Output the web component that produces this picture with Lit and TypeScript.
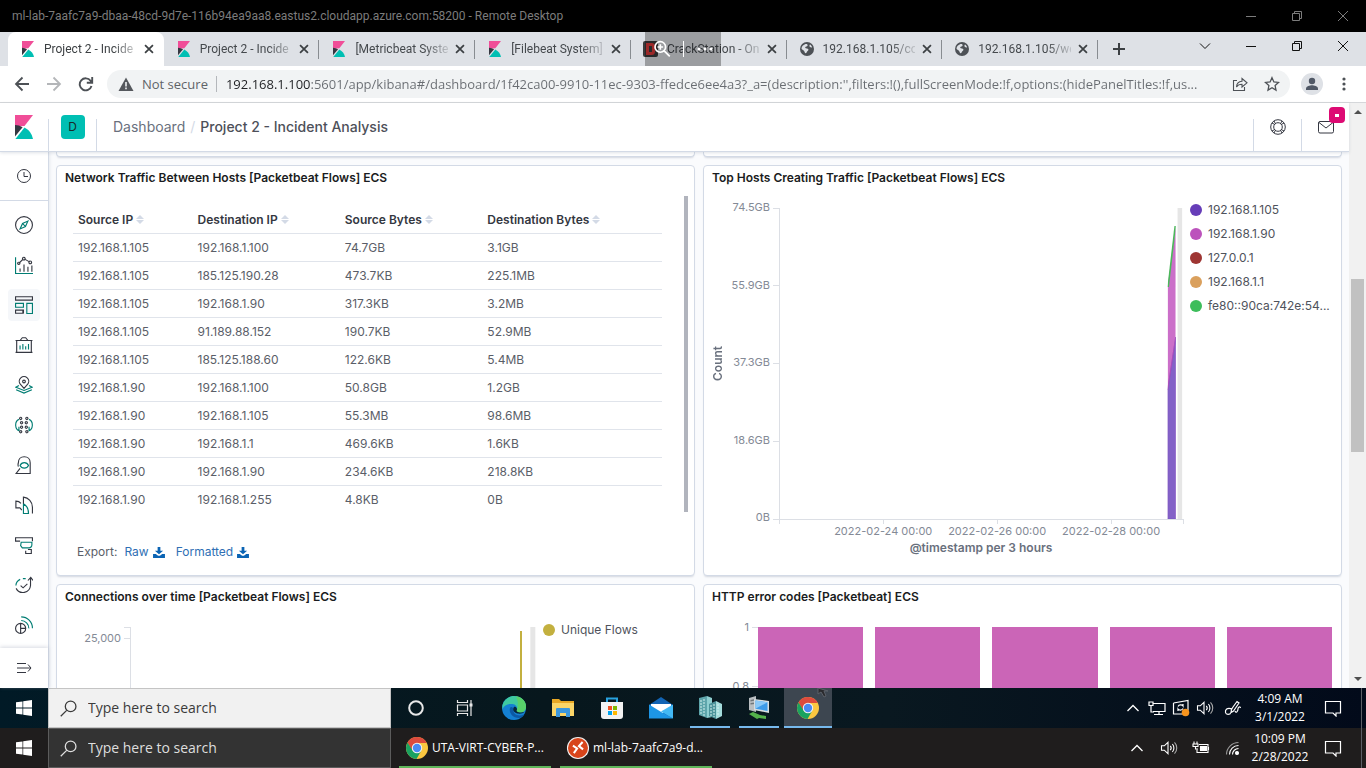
import { LitElement, html, svg, css, nothing } from "lit";
import { customElement, property } from "lit/decorators.js";
import { classMap } from "lit/directives/class-map.js";
import { styleMap } from "lit/directives/style-map.js";

const kibanaMark = (size: number) => html`<svg width=${size} height=${size} viewBox="0 0 24 24" aria-hidden="true">
  <path fill="#f04e98" d="M3 0v11.5L12.5 11 21 0z" />
  <path fill="#343741" d="M3 10v11.5l7.6-9.3A16 16 0 0 0 3 10z" />
  <path fill="#00bfb3" d="M12.5 12.6 3.4 24H21a16.5 16.5 0 0 0-8.5-11.4z" />
</svg>`;

const globe = html`<svg width="16" height="16" viewBox="0 0 16 16" aria-hidden="true">
  <circle cx="8" cy="8" r="7" fill="#4d5156" />
  <path fill="#dee1e6" d="M6 3.2c1.6-.6 3 .2 2.6 1.4-.5 1.2-2 .8-2.4 2-.3 1 1.5.8 2.6 1.1 1 .4.7 1.8-.2 2.4-.9.7-.7 1.9-1.8 2.2-1 .2-1-1.4-1.7-2.3C4.300 9 2.700 8.600 2.500 7.500 2.700 5.500 4.300 3.800 6 3.200zM11 3.600c1 .6 1.700 1.600 2 2.600-.9.500-2.200.1-2.500-.9-.2-.7 0-1.300.5-1.700z" />
</svg>`;

const crack = html`<svg width="16" height="16" viewBox="0 0 16 16" aria-hidden="true">
  <rect x="0" y="0" width="15" height="16" rx="2" fill="#3b3b3d" />
  <path fill="none" stroke="#e03c3c" stroke-width="3" d="M4.500 3.500h4a2 2 0 0 1 2 2v5a2 2 0 0 1-2 2h-4z" />
</svg>`;

const chromeLogo = html`<svg width="24" height="24" viewBox="0 0 24 24" aria-hidden="true">
  <circle cx="12" cy="12" r="11" fill="#fbc740" />
  <path fill="#dd4b3e" d="M2.500 6.500A11 11 0 0 1 21.700 6.900H12L7 14.500z" />
  <path fill="#1aa260" d="M2.500 6.500 7.600 14.500 12 17l4.400-2.500L11.500 23A11 11 0 0 1 2.500 6.500z" />
  <circle cx="12" cy="12" r="5.200" fill="#f4f4f4" />
  <circle cx="12" cy="12" r="4.200" fill="#4a8af4" />
</svg>`;

const winLogo = html`<svg width="16" height="16" viewBox="0 0 16 16" aria-hidden="true" fill="#fff">
  <path d="M0 2.300 6.500 1.400v6.200H0zM7.200 1.300 16 0v7.600H7.200zM0 8.400h6.500v6.200L0 13.700zM7.200 8.400H16V16l-8.800-1.300z" />
</svg>`;

const line = (d: string, size = 16, width = 1, color = "currentColor") => html`<svg
  width=${size} height=${size} viewBox="0 0 16 16" fill="none" stroke=${color} stroke-width=${width} aria-hidden="true"><path d=${d} /></svg>`;

const duo = (dark: string, teal: string) => html`<svg width="18" height="18" viewBox="0 0 16 16" fill="none" aria-hidden="true">
  <path stroke="#343741" d=${dark} /><path stroke="#017d73" d=${teal} /></svg>`;

const chevronUp = line("M2.500 11 8 5.500l5.500 5.500", 16, 1.3);
const notification = html`<svg width="18" height="18" viewBox="0 0 18 18" fill="none" stroke="#fff" stroke-width="1.200" aria-hidden="true">
  <path d="M1.500 2.500h15v11.500h-4.500v3l-3-3h-7.500z" /></svg>`;
const speaker = html`<svg width="18" height="18" viewBox="0 0 18 18" fill="none" stroke="#fff" stroke-width="1.100" aria-hidden="true">
  <path d="M1.500 6.800h2.800L8 3.300v11.400l-3.700-3.500H1.500z" /><path d="M10.300 6.800c1 1.200 1 3.200 0 4.400M12.400 5c2 2.200 2 5.800 0 8" /><path d="M14.500 3.300c3 3 3 8.400 0 11.400" stroke="#aaa" /></svg>`;

@customElement("remote-titlebar")
class RemoteTitlebar extends LitElement {
  static styles = css`
    :host { display: flex; align-items: center; height: 32px; padding-left: 12px; background: #000; color: #7c7c7c;
      font: 12px/16px Roboto, "Noto Sans", sans-serif; }
    .name { flex: 1; white-space: nowrap; overflow: hidden; }
    .win { width: 46px; height: 32px; padding: 0; border: 0; background: none; color: inherit; display: grid; place-items: center; }
  `;
  render() {
    return html`<span class="name">ml-lab-7aafc7a9-dbaa-48cd-9d7e-116b94ea9aa8.eastus2.cloudapp.azure.com:58200 - Remote Desktop</span>
      <button class="win" aria-label="Minimize">${line("M3 8.500h10")}</button>
      <button class="win" aria-label="Restore">${line("M3.500 5.500h7v7h-7zM5.500 5.500v-2h7v7h-2")}</button>
      <button class="win" aria-label="Close">${line("M3 3l10 10M13 3 3 13")}</button>`;
  }
}

@customElement("browser-tabs")
class BrowserTabs extends LitElement {
  static styles = css`
    :host { display: flex; position: relative; height: 34px; background: #dee1e6; color: #45494d;
      font: 12px/16px Roboto, "Noto Sans", sans-serif; }
    .tabs { display: flex; flex: 0 1 1098px; min-width: 0; padding-left: 8px; box-sizing: border-box; }
    .tab { flex: 1 1 0; min-width: 0; display: flex; align-items: center; gap: 8px; padding: 0 7px 0 12px; position: relative; }
    .tab.active { background: #fff; border-radius: 8px 8px 0 0; color: #3c4043; }
    .tab.split::after { content: ""; position: absolute; right: 0; top: 8px; width: 1px; height: 19px; background: #888c91; }
    .icon { display: flex; }
    .label { flex: 1; min-width: 0; white-space: nowrap; margin-right: -4px;
      -webkit-mask-image: linear-gradient(90deg, #000 74%, transparent 106%); mask-image: linear-gradient(90deg, #000 74%, transparent 106%); }
    .x, .plus, .win { border: 0; padding: 0; background: none; color: #3c4043; display: grid; place-items: center; }
    .x { width: 16px; height: 18px; flex: none; }
    .plus { width: 42px; }
    .controls { margin-left: auto; display: flex; color: #111; }
    .win { width: 46px; height: 28px; color: #111; }
    .zoom { position: absolute; left: 645px; top: 0; width: 76px; height: 34px; box-sizing: border-box; background: rgba(0, 0, 0, 0.3);
      display: flex; align-items: center; gap: 12px; padding-left: 8px; color: #fff; }
    .bar { width: 1px; height: 16px; background: #fff; }
  `;
  tabs = [
    { icon: kibanaMark(16), text: "Project 2 - Incide" },
    { icon: kibanaMark(16), text: "Project 2 - Incide" },
    { icon: kibanaMark(16), text: "[Metricbeat Syste" },
    { icon: kibanaMark(16), text: "[Filebeat System]" },
    { icon: crack, text: "CrackStation - On" },
    { icon: globe, text: "192.168.1.105/co" },
    { icon: globe, text: "192.168.1.105/we" },
  ];
  render() {
    return html`<div class="tabs">
        ${this.tabs.map((t, i) => html`<div class=${classMap({ tab: true, active: i === 0, split: i > 0 })}>
          <span class="icon">${t.icon}</span><span class="label">${t.text}</span>
          <button class="x" aria-label="Close tab">${line("M3.500 3.500l9 9M12.500 3.500l-9 9", 14, 2)}</button>
        </div>`)}
      </div>
      <button class="plus" aria-label="New tab">${line("M8 2v12M2 8h12", 16, 2)}</button>
      <div class="controls">
        <button class="win" aria-label="Search tabs">${line("M3 5.500l5 5 5-5")}</button>
        <button class="win" aria-label="Minimize">${line("M3 8.500h10")}</button>
        <button class="win" aria-label="Restore">${line("M3.500 5.500h7v7h-7zM5.500 5.500v-2h7v7h-2")}</button>
        <button class="win" aria-label="Close">${line("M3 3l10 10M13 3 3 13")}</button>
      </div>
      <div class="zoom">
        ${line("M6.500 1.500a4.700 4.700 0 1 0 0 9.400 4.700 4.700 0 0 0 0-9.400zM9.900 9.600l5 5M4 6.200h5M6.500 3.700v5", 18, 1.5)}
        <span class="bar"></span>
        <svg width="18" height="6" fill="#fff" aria-hidden="true"><circle cx="3" cy="3" r="1.500" /><circle cx="9" cy="3" r="1.500" /><circle cx="15" cy="3" r="1.500" /></svg>
      </div>`;
  }
}

@customElement("browser-toolbar")
class BrowserToolbar extends LitElement {
  static styles = css`
    :host { display: flex; align-items: center; height: 36px; padding: 0 6px; background: #fff; border-bottom: 1px solid #d5d7da; color: #4d5156;
      font: 13px/20px "Open Sans", "Noto Sans", sans-serif; }
    button { width: 32px; height: 28px; padding: 0; border: 0; background: none; color: inherit; display: grid; place-items: center; flex: none; }
    .off { color: #b4b6b9; }
    .omni { flex: 1; min-width: 0; display: flex; align-items: center; height: 28px; margin: 0 6px 0 5px; padding: 0 2px 0 11px;
      border-radius: 14px; background: #f1f3f4; }
    .warn { display: flex; margin-right: 8px; }
    .state { color: #5f6368; white-space: nowrap; padding-right: 8px; margin-right: 9px; border-right: 1px solid #b4b7bb; line-height: 16px; }
    .url { flex: 1; min-width: 0; border: 0; padding: 0; margin: 0; outline: 0; font: inherit; color: transparent; text-overflow: ellipsis;
      background: linear-gradient(90deg, #202124 85px, #696d72 85px); -webkit-background-clip: text; background-clip: text; }
  `;
  render() {
    return html`<button aria-label="Back">${line("M15 8H2M8.500 1.500 2 8l6.500 6.500", 16, 1.8)}</button>
      <button class="off" aria-label="Forward">${line("M1 8h13M7.500 1.500 14 8l-6.500 6.500", 16, 1.8)}</button>
      <button aria-label="Reload">${line("M13.500 10a6 6 0 1 1-.9-5.200L14 6.500M14.200 1v5.700H8.800", 16, 1.9)}</button>
      <div class="omni">
        <span class="warn"><svg width="16" height="16" viewBox="0 0 16 16" aria-hidden="true"><path fill="#55585d" d="M8 1.500 15.500 15H.5z" /><path stroke="#f1f3f4" stroke-width="1.600" d="M8 6v4.500M8 11.600v1.600" /></svg></span>
        <span class="state">Not secure</span>
        <input class="url" aria-label="Address" value="192.168.1.100:5601/app/kibana#/dashboard/1f42ca00-9910-11ec-9303-ffedce6ee4a3?_a=(description:'',filters:!(),fullScreenMode:!f,options:(hidePanelTitles:!f,us..." />
        <button aria-label="Share">${line("M5 4.500H1.500v10h11V11M4.500 11c.2-3.500 2-5.500 5.500-5.700V2.500l5 4.300-5 4.200V8.300C7.500 8.300 5.700 9 4.500 11z", 16, 1.1)}</button>
        <button aria-label="Bookmark">${line("M8 1.700l1.900 4.200 4.600.5-3.400 3.100.9 4.600-4-2.400-4 2.400.9-4.600L1.500 6.400l4.600-.5z", 16, 1.3)}</button>
      </div>
      <button aria-label="Profile"><svg width="22" height="22" viewBox="0 0 22 22" aria-hidden="true"><circle cx="11" cy="11" r="11" fill="#dee1e6" /><circle cx="11" cy="8" r="3.200" fill="#505866" /><path fill="#505866" d="M5 17v-1.500c0-2.200 4-3.200 6-3.200s6 1 6 3.200V17z" /></svg></button>
      <button aria-label="Menu"><svg width="4" height="16" fill="#4d5156" aria-hidden="true"><circle cx="2" cy="3" r="1.600" /><circle cx="2" cy="8" r="1.600" /><circle cx="2" cy="13" r="1.600" /></svg></button>`;
  }
}

@customElement("kibana-header")
class KibanaHeader extends LitElement {
  static styles = css`
    :host { display: flex; height: 48px; background: #fff; border-bottom: 1px solid #d3dae6; box-shadow: 0 1px 3px rgba(152, 162, 179, 0.3);
      font: 14px/20px Inter, sans-serif; color: #343741; z-index: 2; }
    .cell { width: 48px; display: grid; place-items: center; box-sizing: border-box; flex: none; position: relative; border: 0; padding: 0; background: none; color: inherit; }
    .rule { border-left: 1px solid #d3dae6; margin-top: 16px; }
    .space { width: 24px; height: 24px; border-radius: 4px; background: #00bfb3; color: #182b2b; font-size: 12px; line-height: 24px; text-align: center; }
    .lift { margin-top: -16px; display: grid; }
    .crumbs { flex: 1; display: flex; gap: 5px; align-items: center; margin-top: 16px; padding: 0 0 16px 16px; border-left: 1px solid #d3dae6; min-width: 0; white-space: nowrap; }
    a { color: #69707d; text-decoration: none; }
    .sep { color: #d3dae6; }
    .here { font-weight: 500; color: #4d5059; }
    .mark { position: absolute; right: 4px; top: -12px; width: 16px; height: 16px; border-radius: 4px; background: #dd0a73; display: grid; place-items: center; }
    .mark::after { content: ""; width: 4px; height: 3px; background: #fff; }
  `;
  render() {
    return html`<span class="cell">${kibanaMark(24)}</span>
      <span class="cell rule"><span class="lift space">D</span></span>
      <nav class="crumbs"><a href="#">Dashboard</a><span class="sep">/</span><span class="here">Project 2 - Incident Analysis</span></nav>
      <button class="cell rule" aria-label="Help"><span class="lift"><svg width="16" height="16" viewBox="0 0 16 16" fill="none" stroke="#343741" aria-hidden="true"><circle cx="8" cy="8" r="7.300" /><circle cx="8" cy="8" r="4.300" /><path d="M2 4l2.600 1.400M4 2l1.400 2.600M14 4l-2.600 1.400M12 2l-1.400 2.600M2 12l2.600-1.400M4 14l1.400-2.600M14 12l-2.600-1.400M12 14l-1.400-2.600" /></svg></span></button>
      <button class="cell rule" aria-label="News"><span class="lift"><svg width="16" height="16" viewBox="0 0 16 16" fill="none" stroke="#343741" aria-hidden="true"><rect x=".5" y="2.500" width="15" height="11.500" rx="1.500" /><path d="M1 3.500 8 9l7-5.500" /></svg></span><span class="mark"></span></button>`;
  }
}

@customElement("kibana-nav")
class KibanaNav extends LitElement {
  static styles = css`
    :host { display: flex; flex-direction: column; flex: none; width: 48px; background: #fff; border-right: 1px solid #d3dae6; box-shadow: 1px 0 3px rgba(152, 162, 179, 0.2); z-index: 1; }
    .recent { height: 48px; border-bottom: 1px solid #d3dae6; display: grid; place-items: center; flex: none; }
    .apps { flex: 1; min-height: 0; overflow: hidden; padding: 8px; display: flex; flex-direction: column; gap: 8px; }
    .foot { height: 40px; display: grid; place-items: center; flex: none; box-shadow: 0 -1px 4px rgba(152, 162, 179, 0.4); }
    button { width: 32px; height: 32px; flex: none; padding: 0; border: 0; border-radius: 4px; background: none; color: #343741; display: grid; place-items: center; }
    .on { background: #f5f7fa; }
  `;
  items = [
    ["Discover", duo("M8 .5a7.500 7.500 0 1 0 0 15 7.500 7.500 0 0 0 0-15z", "M11.500 4.500 9.300 9.300 4.500 11.500 6.700 6.700zM7 7l2 2")],
    ["Visualize", duo("M4.500 11v3M8 7.500V14M11.500 9.500V14M15 8.500V14M4 6l2.500-2.500M9 3l3.500 2M3.300 5.500a1 1 0 1 0 .1 0M7.800 1.200a1.200 1.200 0 1 0 .1 0M13.500 4.500a1.200 1.200 0 1 0 .1 0", "M.5 1v14.500H16")],
    ["Dashboard", duo("M.5.700h15v3H.5zM.5 12.500h6.500v2.800H.5zM7.500 12v3.500", "M.5 6.500h7v3.500h-7zM10.500 6.500h5v9h-5z")],
    ["Canvas", duo("M.5 4h15M1.500 4v11M14.500 4v11M.5 14.500h15M4.500 4l2-2.500h3l2 2.500", "M4.500 8.500V12M7 7v5M9.500 9v3M12 7v5")],
    ["Maps", duo("M8 11 4.700 7.300a4.200 4.200 0 1 1 6.600 0zM8 3.700a1.200 1.200 0 1 0 0 2.400 1.200 1.200 0 0 0 0-2.400z", "M3.500 8.500.800 10 8 12.800 15.200 10l-2.700-1.500M1 12.300 8 15.200l7-2.900")],
    ["Machine Learning", duo("M5 1.200a1 1 0 1 0 .1 0M10.500 1.200a1 1 0 1 0 .1 0M5.800 5a1 1 0 1 0 .1 0M10 5a1 1 0 1 0 .1 0M5.800 9a1 1 0 1 0 .1 0M10 9a1 1 0 1 0 .1 0M5 13a1 1 0 1 0 .1 0M10.500 13a1 1 0 1 0 .1 0", "M3.500 3C1 4 .5 6 .6 8.500.800 11 1.500 12.500 3.500 13V9.500M12.500 3c2.500 1 3 3 2.900 5.500-.2 2.500-.9 4-2.900 4.500V9.500")],
    ["Metrics", duo("M3 9.500A5.300 5.300 0 0 1 3 6C3 3 5 .7 8.200.7S13.500 3 13.500 6v9.500H1L4.500 11", "M4.500 8.500c1.500-3.500 6-3.500 7.500 0-1.500 3-6 3-7.500 0z")],
    ["Logs", duo("M4.500 10.500H.8V4.500c2 0 3.500.8 4.500 2M4.500 10.500l1.500 2M7.500 7V1c4.500.5 8 4 8 9v5.500", "M7.500 7c3 1.500 4.500 4 4.500 8.500H7.500V7")],
    ["APM", duo("M.5 5V1.500h15v3.200M.5 4.500h4M9.500 13v2.500h5V12h-3", "M5.500 5.500h9.500V8a2.500 2.500 0 0 1-2.500 2.500H6.500L5 8.500z")],
    ["Uptime", duo("M1 11a6.800 6.800 0 0 0 12.800-2.500V2M11.500 4 14 1.200 16 4M5 8.500l2.200 2L11 7", "M.8 8.500c.1-2.700 1.500-4.500 3.800-5.500M7 2.300h2.500")],
    ["Security", duo("M5 6.500a4.500 4.500 0 1 0 4.500 4.500H5zM5 6.500v9M9.500 11A4.500 4.500 0 0 0 5 6.500", "M5.500 4A7 7 0 0 1 12.300 11M5.500.8a10 10 0 0 1 10 10")],
  ] as const;
  render() {
    return html`<div class="recent"><button aria-label="Recently viewed">${line("M8 1.500a6.500 6.500 0 1 0 0 13 6.500 6.500 0 0 0 0-13zM8 4v4.500h4")}</button></div>
      <nav class="apps">${this.items.map(([n, i], k) => html`<button class=${classMap({ on: k === 2 })} aria-label=${n}>${i}</button>`)}</nav>
      <div class="foot"><button aria-label="Expand">${line("M1 3.500h9M1 8h14M1 12.500h9M12 4.500 15 8l-3 3.500")}</button></div>`;
  }
}

@customElement("dash-panel")
class DashPanel extends LitElement {
  @property() heading = "";
  static styles = css`
    :host { display: block; box-sizing: border-box; min-width: 0; background: #fff; border: 1px solid #d3dae6; border-radius: 4px;
      box-shadow: 0 2px 2px -1px rgba(152, 162, 179, 0.4); font-family: Inter, sans-serif; }
    h2 { margin: 0; padding: 0 8px; font-size: 12px; line-height: 24px; font-weight: 600; color: #1a1c21; white-space: nowrap; overflow: hidden; }
  `;
  render() {
    return html`<h2>${this.heading}</h2><slot></slot>`;
  }
}

@customElement("traffic-table")
class TrafficTable extends LitElement {
  static styles = css`
    :host { display: flex; flex-direction: column; height: 385px; padding: 6px 6px 0 16px; box-sizing: border-box; font: 12px/16px Inter, sans-serif; color: #5a5e68; }
    .scroll { display: flex; justify-content: space-between; gap: 22px; height: 316px; }
    table { flex: 1; border-collapse: collapse; table-layout: fixed; margin-top: 10px; align-self: flex-start; }
    th, td { height: 27px; padding: 0 0 0 5px; text-align: left; border-bottom: 1px solid #e0e4eb; white-space: nowrap; }
    th { font-weight: 600; color: #343741; }
    tr:last-child td { border-bottom: 0; }
    .a { width: 20.3%; } .b { width: 25%; } .c { width: 24.2%; }
    .thumb { width: 4px; background: #b1b4bd; }
    .sort { margin-left: 3px; }
    .export { display: flex; align-items: center; padding: 32px 0 0 4px; }
    .export a { display: flex; align-items: center; gap: 4px; margin-left: 7px; margin-right: 4px; color: #2f6fb4; text-decoration: none; }
  `;
  rows = [
    ["192.168.1.105", "192.168.1.100", "74.7GB", "3.1GB"],
    ["192.168.1.105", "185.125.190.28", "473.7KB", "225.1MB"],
    ["192.168.1.105", "192.168.1.90", "317.3KB", "3.2MB"],
    ["192.168.1.105", "91.189.88.152", "190.7KB", "52.9MB"],
    ["192.168.1.105", "185.125.188.60", "122.6KB", "5.4MB"],
    ["192.168.1.90", "192.168.1.100", "50.8GB", "1.2GB"],
    ["192.168.1.90", "192.168.1.105", "55.3MB", "98.6MB"],
    ["192.168.1.90", "192.168.1.1", "469.6KB", "1.6KB"],
    ["192.168.1.90", "192.168.1.90", "234.6KB", "218.8KB"],
    ["192.168.1.90", "192.168.1.255", "4.8KB", "0B"],
  ];
  render() {
    const sort = html`<svg class="sort" width="8" height="9" viewBox="0 0 8 9" fill="#d3dae6" aria-hidden="true"><path d="M4 0l4 4H0zM0 5h8L4 9z" /></svg>`;
    const save = html`<svg width="12" height="11" viewBox="0 0 13 12" fill="#0b64b4" aria-hidden="true"><path d="M5 0h3v4h3L6.500 8 2 4h3zM0 7.500h3l2.500 2h2l2.500-2h3V12H0z" /></svg>`;
    return html`<div class="scroll">
        <table>
          <thead><tr><th class="a">Source IP${sort}</th><th class="b">Destination IP${sort}</th><th class="c">Source Bytes${sort}</th><th>Destination Bytes${sort}</th></tr></thead>
          <tbody>${this.rows.map((r) => html`<tr>${r.map((c) => html`<td>${c}</td>`)}</tr>`)}</tbody>
        </table>
        <div class="thumb"></div>
      </div>
      <div class="export">Export: <a href="#">Raw ${save}</a><a href="#">Formatted ${save}</a></div>`;
  }
}

const chartBase = css`
  :host { display: block; font: 11px/14px Inter, sans-serif; color: #848a96; }
  .chart { display: grid; }
  .ylabels { display: flex; flex-direction: column; justify-content: space-between; text-align: right; }
  .plot, .ticks { display: block; width: 100%; overflow: visible; }
  .axis { stroke: #dcdfe5; stroke-width: 1; shape-rendering: crispEdges; }
  .legend { list-style: none; margin: 0; padding: 0; font-size: 12px; line-height: 24px; color: #4f535c; white-space: nowrap; }
  .legend li { display: flex; align-items: center; gap: 6px; }
  .dot { width: 12px; height: 12px; border-radius: 50%; flex: none; }
`;

@customElement("hosts-chart")
class HostsChart extends LitElement {
  static styles = [
    chartBase,
    css`
      .chart { grid-template-columns: 12px 46px 6px minmax(0, 1fr) 150px; padding: 18px 8px 0; }
      .title { writing-mode: vertical-rl; transform: rotate(180deg); align-self: start; height: 310px; text-align: center; font-weight: 600; font-size: 12px; line-height: 12px; color: #69707d; }
      .ylabels { height: 324px; margin: -8px 0 0; }
      .ticks { margin-left: 3px; height: 311px; }
      .plot { margin-left: 3px; width: calc(100% - 3px); height: 350px; }
      .x { fill: #848a96; text-anchor: middle; }
      .xt { fill: #69707d; text-anchor: middle; font-weight: 600; font-size: 12px; }
      .legend { margin: -10px 0 0 7px; }
    `,
  ];
  labels = ["74.5GB", "55.9GB", "37.3GB", "18.6GB", "0B"];
  hosts = [
    ["192.168.1.105", "#663db8"],
    ["192.168.1.90", "#bc52bc"],
    ["127.0.0.1", "#9e3533"],
    ["192.168.1.1", "#daa05d"],
    ["fe80::90ca:742e:54...", "#3dbd5b"],
  ];
  render() {
    return html`<div class="chart">
      <div class="title">Count</div>
      <div class="ylabels">${this.labels.map((l) => html`<span>${l}</span>`)}</div>
      <svg class="ticks" aria-hidden="true">${[0, 25, 50, 75, 100].map((p) => svg`<line class="axis" x1="0" x2="6" y1=${p + "%"} y2=${p + "%"} />`)}</svg>
      <svg class="plot">
        <line class="axis" x1="0" x2="0" y1="0" y2="316" />
        <line class="axis" x1="0" x2="100%" y1="311" y2="311" />
        ${["0%", "25.800%", "54%", "82.200%", "100%"].map((p) => svg`<line class="axis" x1=${p} x2=${p} y1="311" y2="316" />`)}
        <svg x="98.600%" width="5" height="311"><rect width="5" height="311" fill="#e6e6e6" /></svg>
        <svg x="96.200%" width="2%" height="311" viewBox="0 0 8 311" preserveAspectRatio="none">
          <path fill="#cb6fc9" d="M0 79 8 18V311H0z" />
          <path fill="#8361c7" stroke="#704cbf" stroke-width=".6" d="M0 182 8 129V311H0z" />
          <path fill="none" stroke="#b948b9" stroke-width=".7" d="M0 182 8 129" />
          <path fill="none" stroke="#4ab85a" stroke-width="1.600" d="M.5 79 7.500 18" />
        </svg>
        <text class="x" x="25.800%" y="327">2022-02-24 00:00</text>
        <text class="x" x="54%" y="327">2022-02-26 00:00</text>
        <text class="x" x="82.200%" y="327">2022-02-28 00:00</text>
        <text class="xt" x="50%" y="344">@timestamp per 3 hours</text>
      </svg>
      <ul class="legend">${this.hosts.map(([n, c]) => html`<li><span class="dot" style=${styleMap({ background: c })}></span>${n}</li>`)}</ul>
    </div>`;
  }
}

@customElement("flows-chart")
class FlowsChart extends LitElement {
  static styles = [
    chartBase,
    css`
      .chart { grid-template-columns: 56px 6px minmax(0, 1fr) 150px; padding: 18px 8px 0; }
      .ylabels { padding-top: 4px; }
      .ticks { margin-left: 3px; height: 120px; }
      .plot { margin-left: 3px; width: calc(100% - 3px); height: 120px; }
      .legend { margin: -9px 0 0 7px; }
    `,
  ];
  render() {
    return html`<div class="chart">
      <div class="ylabels"><span>25,000</span></div>
      <svg class="ticks" aria-hidden="true"><line class="axis" x1="0" x2="6" y1="0" y2="0" /><line class="axis" x1="0" x2="6" y1="11" y2="11" /></svg>
      <svg class="plot">
        <line class="axis" x1="0" x2="0" y1="0" y2="120" />
        <rect x="98.600%" width="5" height="120" fill="#e6e6e6" />
        <line x1="96.300%" x2="96.300%" y1="4" y2="120" stroke="#c3b03f" stroke-width="2" />
      </svg>
      <ul class="legend"><li><span class="dot" style=${styleMap({ background: "#c3b03f" })}></span>Unique Flows</li></ul>
    </div>`;
  }
}

@customElement("errors-chart")
class ErrorsChart extends LitElement {
  static styles = [
    chartBase,
    css`
      .chart { grid-template-columns: 37px 6px minmax(0, 1fr); padding: 18px 9px 0 8px; column-gap: 3px; }
      .ylabels { height: 73px; margin-top: -7px; }
      .ticks { height: 120px; }
      .bars { display: flex; gap: 12px; height: 120px; margin-left: -3px; }
      .bar { flex: 1; background: #cb65b7; }
    `,
  ];
  render() {
    return html`<div class="chart">
      <div class="ylabels"><span>1</span><span>0.8</span></div>
      <svg class="ticks" aria-hidden="true"><line class="axis" x1="0" x2="6" y1="0" y2="0" /><line class="axis" x1="0" x2="6" y1="59" y2="59" /></svg>
      <div class="bars">${[1, 2, 3, 4, 5].map(() => html`<span class="bar"></span>`)}</div>
    </div>`;
  }
}

@customElement("page-scrollbar")
class PageScrollbar extends LitElement {
  static styles = css`
    :host { display: flex; flex-direction: column; align-items: center; width: 17px; flex: none; background: #f1f1f1; }
    .arrow { height: 18px; display: grid; place-items: center; flex: none; }
    .before { flex: 158; } .thumb { flex: 174; width: 13px; background: #c1c1c1; } .after { flex: 218; }
  `;
  render() {
    return html`<span class="arrow"><svg width="8" height="4" aria-hidden="true"><path fill="#505050" d="M4 0l4 4H0z" /></svg></span>
      <span class="before"></span><span class="thumb"></span><span class="after"></span>
      <span class="arrow"><svg width="8" height="4" aria-hidden="true"><path fill="#505050" d="M0 0h8L4 4z" /></svg></span>`;
  }
}

const remoteApps = [
  ["Cortana", 0, html`<svg width="18" height="18" viewBox="0 0 18 18" aria-hidden="true"><circle cx="9" cy="9" r="6.800" fill="none" stroke="#e8e8e8" stroke-width="2" /></svg>`],
  ["Task View", 0, html`<svg width="18" height="18" viewBox="0 0 18 18" fill="none" stroke="#e8e8e8" stroke-width="1.200" aria-hidden="true"><path d="M1.500 1v2.500h10V1M1.500 17v-2.500h10V17M1.500 6h10v6h-10zM15 1v16" /><path stroke-width="3" d="M15 4.500v3" /></svg>`],
  ["Edge", 0, html`<svg width="26" height="26" viewBox="0 0 26 26" aria-hidden="true"><circle cx="13" cy="13" r="12" fill="#1480d2" /><path fill="#3fc9a0" d="M1.500 10C3.500 4 8 1 13 1c7 0 12 5 12 10.500 0 4-3 6-6 6-2.500 0-4-1-3.500-2 1.500-2 .5-6-4-6.500C7 8.500 3 10 1.500 14z" /><path fill="#58d06a" d="M15 1.300c6 .8 10 5.200 10 10.200 0 4-3 6-6 6-2.500 0-4-1-3.500-2 2-3 2-8-.5-14.200z" /><path fill="#0c59a4" d="M9 13c-1.500 5 3 10 9 10 2 0 4-1.500 5-3.500-6 2.500-11.500-.5-10.500-5 0-2-2.500-3.500-3.500-1.500z" /><path fill="#06283b" d="M13 12c-1.500 2-1 5.500 3.500 6.500 3 .5 5.500-.2 7-1.500-2 .7-6 .8-7.500-.5-.8-.7-.3-1 0-2 .2-1.500-1.500-3.500-3-2.500z" /></svg>`],
  ["File Explorer", 0, html`<svg width="24" height="22" viewBox="0 0 24 22" aria-hidden="true"><path fill="#e9a825" d="M1 2h7l2 2h13v14H1z" /><path fill="#fbd567" d="M1 6h22v13H1z" /><path fill="#3c97dc" d="M5 12a1 1 0 0 1 1-1h12a1 1 0 0 1 1 1v8h-4v-4H9v4H5z" /></svg>`],
  ["Store", 0, html`<svg width="24" height="26" viewBox="0 0 24 26" aria-hidden="true"><path fill="none" stroke="#29a3e0" stroke-width="2" d="M7 7V3.500h10V7" /><path fill="#f3f3f3" d="M1 7h22v14a3 3 0 0 1-3 3H4a3 3 0 0 1-3-3z" /><path fill="#f25022" d="M8 11h4v4H8z" /><path fill="#7fba00" d="M13 11h4v4h-4z" /><path fill="#00a4ef" d="M8 16h4v4H8z" /><path fill="#ffb900" d="M13 16h4v4h-4z" /></svg>`],
  ["Mail", 0, html`<svg width="24" height="24" viewBox="0 0 24 24" aria-hidden="true"><path fill="#1264b4" d="M0 9 12 1l12 8v13H0z" /><path fill="#fff" d="M2 8h20v4L12 18 2 12z" /><path fill="#1d96e6" d="M0 8.500 13 16.500 24 22.500H0z" /><path fill="#43b9f5" d="M24 8.500v14L12 15.500z" /></svg>`],
  ["Server Manager", 1, html`<svg width="26" height="26" viewBox="0 0 26 26" aria-hidden="true"><path fill="#5ea5ab" d="M2 3 10 1v22l-8-3z" /><path fill="#8fcfd1" d="m10 1 5 2v19l-5 1z" /><path fill="#4d949b" d="m12 9 7-3v18l-7-3z" /><path fill="#a4dcdc" d="m19 6 6 3v12l-6 3z" /><path stroke="#d3f0ee" d="M4 5v14M7 4v17M14 10v11M17 9v13M21 9v12" stroke-dasharray="2 1" /></svg>`],
  ["Remote Session", 1, html`<svg width="24" height="26" viewBox="0 0 24 26" aria-hidden="true"><path fill="#b9bec1" d="M2 3 9 1v16l-7-2z" /><path fill="#70777b" d="M3.500 5 8 4v1.500l-4.500 1zM3.500 8 8 7.500V9l-4.500.5z" /><path fill="#d7dde0" d="m7 4 15 2v12L7 15z" /><path fill="#3d9be9" d="m8.500 5.600 12 1.600v8.800l-12-2.300z" /><path fill="#8ac9f8" d="m8.500 5.600 12 1.600-12 6.500z" /><path fill="#54b14b" d="m2 19 4-2 7 3 6 1v3l-7-1-2 1z" /></svg>`],
  ["Google Chrome", 2, chromeLogo],
] as const;

const barBase = css`
  :host { display: flex; height: 40px; color: #fff; font: 12px/16px "Open Sans", "Noto Sans", sans-serif; }
  button { padding: 0; border: 0; background: none; color: inherit; font: inherit; display: grid; place-items: center; flex: none; }
  .start { width: 48px; }
  .search { width: 343px; box-sizing: border-box; flex: none; display: flex; align-items: center; gap: 11px; padding: 0 11px; border: 1px solid; }
  .search input { flex: 1; min-width: 0; border: 0; padding: 0; outline: 0; background: none; color: inherit; font: 14px/20px "Open Sans", "Noto Sans", sans-serif; }
  .search input::placeholder { color: inherit; opacity: 1; }
  .tray { margin-left: auto; display: flex; align-items: stretch; }
  .t { width: 24px; } .w { width: 32px; } .note { width: 44px; }
  .clock { width: 62px; text-align: center; align-self: center; line-height: 18px; white-space: nowrap; }
  .peek { width: 4px; margin-left: 6px; border-left: 1px solid #5b5f66; }
`;
const searchIcon = line("M10 1a5 5 0 1 0 0 10 5 5 0 0 0 0-10zM6.500 9.500 .7 15.300", 17, 1.2);
const clock = (a: string, b: string) => html`<div class="clock">${a}<br />${b}</div>`;

@customElement("remote-taskbar")
class RemoteTaskbar extends LitElement {
  static styles = [
    barBase,
    css`
      :host { background: linear-gradient(90deg, #011a26, #07171d 40%, #091820 65%, #020a1a); }
      .search { background: #f1f1f1; border-color: #c4c4c4; color: #3b3b3b; }
      .apps { display: flex; gap: 1px; padding-left: 1px; }
      .app { width: 48px; position: relative; }
      .open::after, .current::after { content: ""; position: absolute; bottom: 0; left: 4px; right: 4px; height: 2px; background: #76b9ed; }
      .current { background: #3d4650; }
      .current::after { left: 0; right: 0; }
      .cursor { position: absolute; right: 3px; top: 0; }
    `,
  ];
  render() {
    return html`<button class="start" aria-label="Start">${winLogo}</button>
      <label class="search">${searchIcon}<input placeholder="Type here to search" aria-label="Search the remote computer" /></label>
      <div class="apps">${remoteApps.map(([n, s, i]) => html`<button class=${classMap({ app: true, open: s === 1, current: s === 2 })} aria-label=${n}>${i}${s === 2 ? html`<svg class="cursor" width="12" height="10" viewBox="0 0 12 10" aria-hidden="true"><path fill="#2b2b2e" stroke="#5b6068" d="M1 0v6l3-2 3 5 2-1-2-5h4z" /></svg>` : nothing}</button>`)}</div>
      <div class="tray">
        <button class="t" aria-label="Show hidden icons">${chevronUp}</button>
        <button class="t" aria-label="Network"><svg width="18" height="16" viewBox="0 0 18 16" fill="none" stroke="#fff" stroke-width="1.200" aria-hidden="true"><path d="M5 3.500h12v8H5M11 11.500v3M6 14.500h9M1 2h4v3.500H1zM3 5.500v6.500h3" /></svg></button>
        <button class="t" aria-label="Updates"><svg width="18" height="18" viewBox="0 0 18 18" fill="none" stroke="#fff" stroke-width="1.200" aria-hidden="true"><path d="M1.500 4 16 1.500v10M1.500 4v11h9M6 7.500c1-2 4-2 5-.5V5M11 9.500c-1 2-4 2-5 .5v2" /><circle cx="13.500" cy="13.500" r="3.800" fill="#f7941d" stroke="none" /></svg></button>
        <button class="t" aria-label="Volume">${speaker}</button>
        <button class="w" aria-label="Ink Workspace"><svg width="18" height="18" viewBox="0 0 18 18" fill="none" stroke="#fff" stroke-width="1.200" aria-hidden="true"><path d="M9 8 13 2.500l2 1.500-5.500 8-2.500 1.500.5-3zM8 10C3 8 1 11 1.500 13.500S6 16 7 13.500M11 12c1 3 3 0 3-2s2-3 2.500-1" /></svg></button>
        ${clock("4:09 AM", "3/1/2022")}
        <button class="note" aria-label="Notifications">${notification}</button><span class="peek"></span>
      </div>`;
  }
}

@customElement("local-taskbar")
class LocalTaskbar extends LitElement {
  static styles = [
    barBase,
    css`
      :host { background: #1f1d1d; }
      .search { background: #333; border-color: #5c5c5c; color: #dedede; }
      .apps { display: flex; gap: 9px; padding-left: 8px; }
      .task { width: 152px; display: flex; align-items: center; gap: 3px; padding-left: 6px; border-bottom: 2px solid #5fb65a; border-top: 2px solid transparent; white-space: nowrap; }
    `,
  ];
  render() {
    return html`<button class="start" aria-label="Start">${winLogo}</button>
      <label class="search">${searchIcon}<input placeholder="Type here to search" aria-label="Search" /></label>
      <div class="apps">
        <button class="task">${chromeLogo}UTA-VIRT-CYBER-P...</button>
        <button class="task"><svg width="24" height="24" viewBox="0 0 26 26" aria-hidden="true"><circle cx="13" cy="13" r="12" fill="#f2f2f2" /><circle cx="13" cy="13" r="10.800" fill="#d8451b" /><path fill="none" stroke="#fff" stroke-width="2.200" d="m7.500 10.500 4.500 3-3.500 5M18 6.500l-4 4.500 4.500 3.500" /></svg>ml-lab-7aafc7a9-d...</button>
      </div>
      <div class="tray">
        <button class="w" aria-label="Show hidden icons">${chevronUp}</button>
        <button class="w" aria-label="Volume">${speaker}</button>
        <button class="w" aria-label="Battery"><svg width="18" height="14" viewBox="0 0 18 14" fill="none" stroke="#fff" stroke-width="1.100" aria-hidden="true"><path d="M7 3.500h9v8H5V8.500M16.500 6v3" /><path fill="#fff" d="M8.500 5.500h6v4h-6z" /><path d="M2 .5v2M5 .5v2M1 3h5v2.500H1zM3.500 5.500V8H6" /></svg></button>
        <button class="w" aria-label="Wi-Fi"><svg width="16" height="16" viewBox="0 0 16 16" fill="none" stroke="#fff" stroke-width="1.100" aria-hidden="true"><path stroke="#999" d="M1.500 14.500A12 12 0 0 1 13.500 2.500" /><path d="M4.500 14.500a9 9 0 0 1 9-9M7.500 14.500a6 6 0 0 1 6-6" /><circle cx="12" cy="13" r="1.500" fill="#fff" /></svg></button>
        ${clock("10:09 PM", "2/28/2022")}
        <button class="note" aria-label="Notifications">${notification}</button><span class="peek"></span>
      </div>`;
  }
}

@customElement("app-root")
class AppRoot extends LitElement {
  static styles = css`
    :host { display: flex; flex-direction: column; height: 100vh; overflow: hidden; }
    remote-titlebar, browser-tabs, browser-toolbar, remote-taskbar, local-taskbar { flex: none; }
    .page { flex: 1; min-height: 0; display: flex; }
    .kibana { flex: 1; min-width: 0; display: flex; flex-direction: column; }
    .body { flex: 1; min-height: 0; display: flex; }
    .board { flex: 1; min-width: 0; overflow: hidden; background: #fafbfd; display: grid; align-content: start;
      grid-template-columns: repeat(2, minmax(0, 1fr)); gap: 8px; padding: 0 7px; }
    .past { height: 5px; box-sizing: border-box; background: #fff; border: 1px solid #d3dae6; border-top: 0; border-radius: 0 0 4px 4px; box-shadow: 0 2px 2px -1px rgba(152, 162, 179, 0.4); }
  `;
  render() {
    return html`<remote-titlebar></remote-titlebar>
      <browser-tabs></browser-tabs>
      <browser-toolbar></browser-toolbar>
      <div class="page">
        <div class="kibana">
          <kibana-header></kibana-header>
          <div class="body">
            <kibana-nav></kibana-nav>
            <main class="board">
              <div class="past"></div><div class="past"></div>
              <dash-panel heading="Network Traffic Between Hosts [Packetbeat Flows] ECS"><traffic-table></traffic-table></dash-panel>
              <dash-panel heading="Top Hosts Creating Traffic [Packetbeat Flows] ECS"><hosts-chart></hosts-chart></dash-panel>
              <dash-panel heading="Connections over time [Packetbeat Flows] ECS"><flows-chart></flows-chart></dash-panel>
              <dash-panel heading="HTTP error codes [Packetbeat] ECS"><errors-chart></errors-chart></dash-panel>
            </main>
          </div>
        </div>
        <page-scrollbar></page-scrollbar>
      </div>
      <remote-taskbar></remote-taskbar>
      <local-taskbar></local-taskbar>`;
  }
}
